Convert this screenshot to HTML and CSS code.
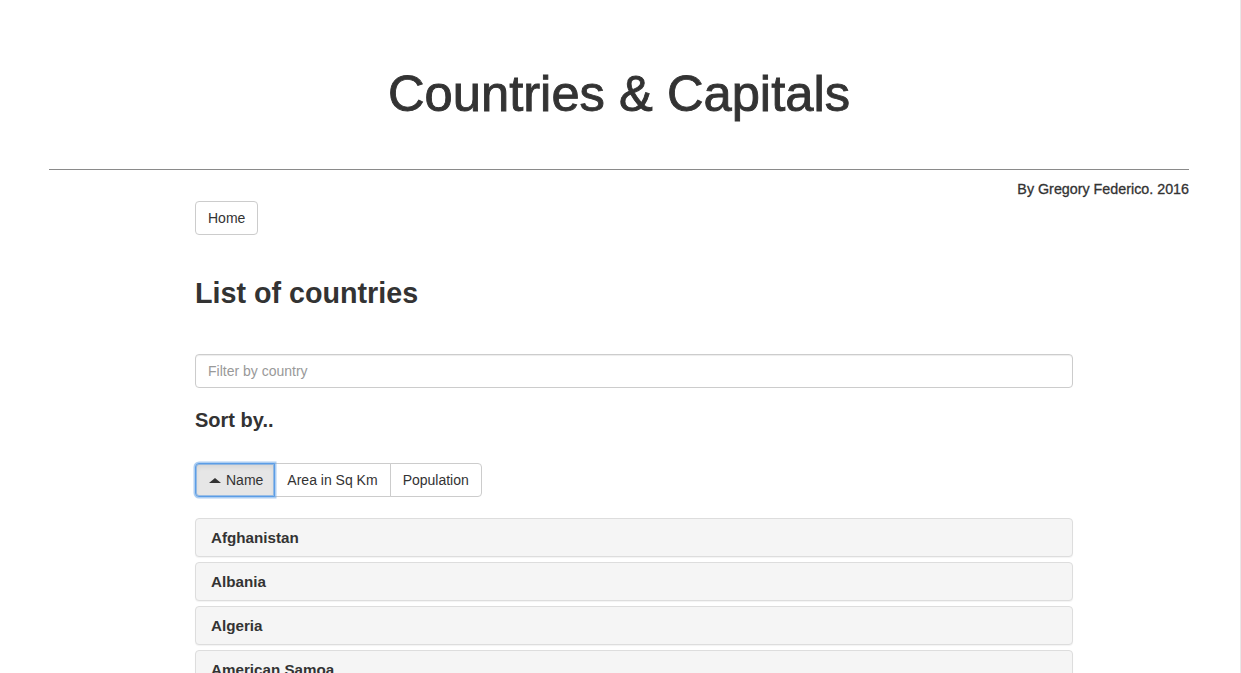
FILE: index.html
```html
<!DOCTYPE html>
<html lang="en">
<head>
<meta charset="utf-8">
<title>Countries &amp; Capitals</title>
<link rel="stylesheet" href="styles.css">
</head>
<body>
<div class="page">
  <header class="masthead">
    <h1 class="site-title">Countries &amp; Capitals</h1>
  </header>
  <hr class="rule">
  <p class="byline">By Gregory Federico. 2016</p>
  <main class="content">
    <nav class="nav">
      <a class="btn" href="#">Home</a>
    </nav>
    <h2 class="section-title">List of countries</h2>
    <input class="filter" type="text" placeholder="Filter by country">
    <h4 class="sort-title">Sort by..</h4>
    <div class="btn-group">
      <button class="btn btn-active" type="button"><span class="tri-up"></span>Name</button>
      <button class="btn" type="button">Area in Sq Km</button>
      <button class="btn" type="button">Population</button>
    </div>
    <div class="list">
      <div class="panel"><h4 class="panel-title">Afghanistan</h4></div>
      <div class="panel"><h4 class="panel-title">Albania</h4></div>
      <div class="panel"><h4 class="panel-title">Algeria</h4></div>
      <div class="panel"><h4 class="panel-title">American Samoa</h4></div>
      <div class="panel"><h4 class="panel-title">Andorra</h4></div>
      <div class="panel"><h4 class="panel-title">Angola</h4></div>
    </div>
  </main>
</div>
</body>
</html>
```
FILE: styles.css
```css
html {
  overflow: hidden;
}

body {
  margin: 0;
  font-family: "Liberation Sans", Arial, sans-serif;
  font-size: 14px;
  line-height: 20px;
  color: #333;
  background: #fff;
}

.page {
  box-sizing: border-box;
  width: 1241px;
  min-height: 673px;
  padding: 66px 2px 0 0;
  border-right: 1px solid #e8e8e8;
}

.site-title {
  margin: 0;
  text-align: center;
  font-size: 50.7px;
  font-weight: 400;
  line-height: 56px;
  color: #333;
  -webkit-text-stroke: 0.9px #333;
}

.rule {
  height: 0;
  margin: 47px 49px 0;
  border: 0;
  border-top: 1px solid #8a8a8a;
}

.byline {
  margin: 9px 49px 0;
  text-align: right;
  font-size: 14.3px;
  line-height: 20px;
  -webkit-text-stroke: 0.3px #333;
}

.content {
  width: 878px;
  margin-left: 195px;
}

.nav {
  margin-top: 2px;
}

.btn {
  display: inline-block;
  box-sizing: border-box;
  margin: 0;
  padding: 6px 12px;
  border: 1px solid #ccc;
  border-radius: 4px;
  background: #fff;
  color: #333;
  font-family: inherit;
  font-size: 14px;
  line-height: 20px;
  text-decoration: none;
  cursor: pointer;
  -webkit-appearance: none;
  appearance: none;
}

.section-title {
  margin: 43px 0 0;
  font-size: 28.7px;
  font-weight: 700;
  line-height: 31.6px;
}

.filter {
  display: block;
  box-sizing: border-box;
  width: 100%;
  height: 34px;
  margin-top: 44px;
  padding: 6px 12px;
  border: 1px solid #ccc;
  border-radius: 4px;
  font-family: inherit;
  font-size: 14px;
  line-height: 20px;
  color: #555;
  box-shadow: inset 0 1px 1px rgba(0, 0, 0, 0.075);
  outline: none;
}

.filter::placeholder {
  color: #999;
}

.sort-title {
  margin: 21px 0 0;
  font-size: 20px;
  font-weight: 700;
  line-height: 22px;
}

.btn-group {
  display: flex;
  margin-top: 32px;
}

.btn-group .btn {
  border-radius: 0;
}

.btn-group .btn + .btn {
  margin-left: -1px;
}

.btn-group .btn:first-child {
  border-radius: 4px 0 0 4px;
}

.btn-group .btn:last-child {
  border-radius: 0 4px 4px 0;
}

.btn-group .btn-active {
  position: relative;
  z-index: 2;
  padding-right: 11px;
  background: #e6e6e6;
  border-color: #5b9de6;
  box-shadow: 0 0 0 1.5px rgba(91, 157, 230, 0.5), inset 0 0 0 1px rgba(91, 157, 230, 0.55), inset 0 3px 5px rgba(0, 0, 0, 0.08);
}

.tri-up {
  display: inline-block;
  width: 0;
  height: 0;
  margin: 0 5px 2px 1px;
  border-left: 6px solid transparent;
  border-right: 6px solid transparent;
  border-bottom: 5px solid #333;
}

.list {
  display: flex;
  flex-direction: column;
  gap: 5px;
  margin-top: 21px;
}

.panel {
  padding: 10px 15px;
  border: 1px solid #ddd;
  border-radius: 4px;
  background: #f5f5f5;
  box-shadow: 0 1px 1px rgba(0, 0, 0, 0.05);
}

.panel-title {
  margin: 0;
  font-size: 15.2px;
  font-weight: 700;
  line-height: 17px;
  color: #333;
}
```
